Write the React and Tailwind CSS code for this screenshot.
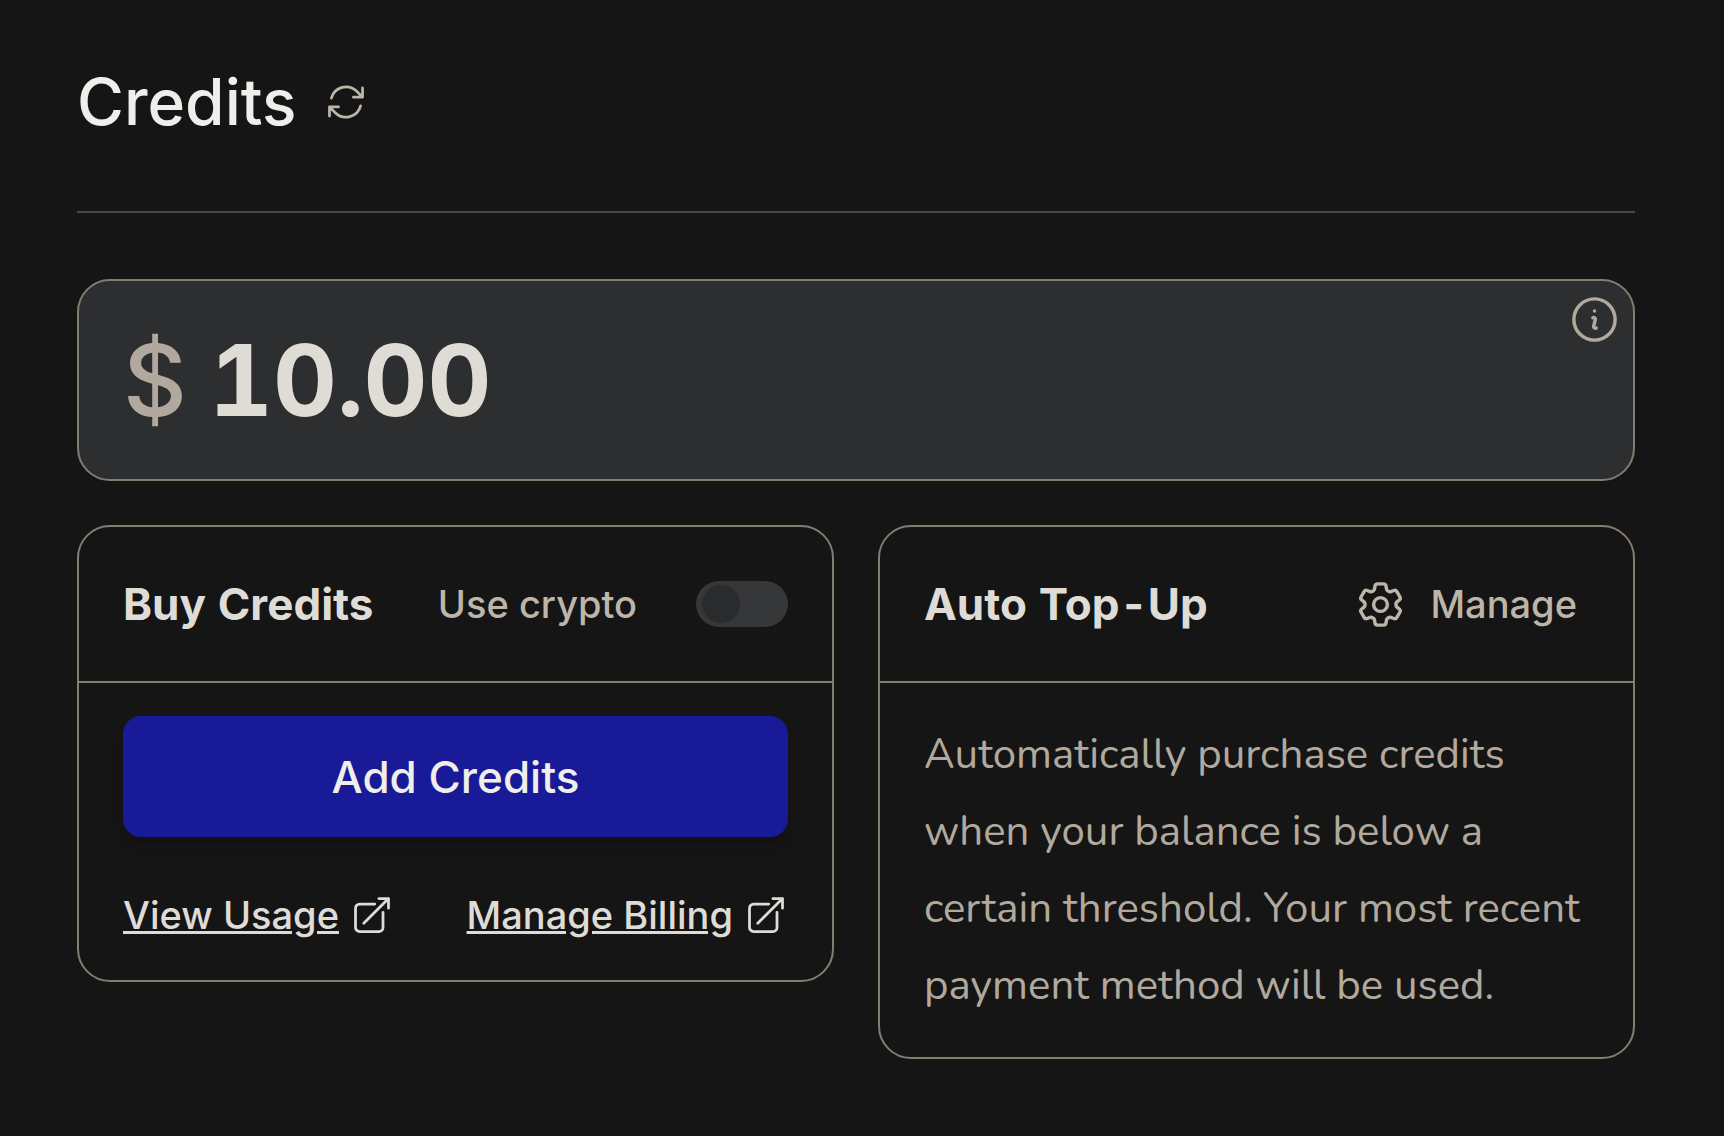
import React, { useState } from "react";

const Icon = ({ className, children }) => (
  <svg
    className={className}
    viewBox="0 0 24 24"
    fill="none"
    stroke="currentColor"
    strokeWidth="1.5"
    strokeLinecap="round"
    strokeLinejoin="round"
    aria-hidden="true"
  >
    {children}
  </svg>
);

const RefreshIcon = () => (
  <Icon className="size-11">
    <path d="M16.023 9.348h4.992v-.001M2.985 19.644v-4.992m0 0h4.992m-4.993 0 3.181 3.183a8.25 8.25 0 0 0 13.803-3.7M4.031 9.865a8.25 8.25 0 0 1 13.803-3.7l3.181 3.182m0-4.991v4.99" />
  </Icon>
);

const InfoIcon = () => (
  <Icon className="size-[55px]">
    <path d="m11.25 11.25.041-.02a.75.75 0 0 1 1.063.852l-.708 2.836a.75.75 0 0 0 1.063.853l.041-.021M21 12a9 9 0 1 1-18 0 9 9 0 0 1 18 0Zm-9-3.75h.008v.008H12V8.25Z" />
  </Icon>
);

const CogIcon = () => (
  <Icon className="size-[55px]">
    <path d="M9.594 3.94c.09-.542.56-.94 1.11-.94h2.593c.55 0 1.02.398 1.11.94l.213 1.281c.063.374.313.686.645.87.074.04.147.083.22.127.325.196.72.257 1.075.124l1.217-.456a1.125 1.125 0 0 1 1.37.49l1.296 2.247a1.125 1.125 0 0 1-.26 1.431l-1.003.827c-.293.241-.438.613-.43.992a7.723 7.723 0 0 1 0 .255c-.008.378.137.75.43.991l1.004.827c.424.35.534.955.26 1.43l-1.298 2.247a1.125 1.125 0 0 1-1.369.491l-1.217-.456c-.355-.133-.75-.072-1.076.124a6.47 6.47 0 0 1-.22.128c-.331.183-.581.495-.644.869l-.213 1.281c-.09.543-.56.94-1.11.94h-2.594c-.55 0-1.019-.398-1.11-.94l-.213-1.281c-.062-.374-.312-.686-.644-.87a6.52 6.52 0 0 1-.22-.127c-.325-.196-.72-.257-1.076-.124l-1.217.456a1.125 1.125 0 0 1-1.369-.49l-1.297-2.247a1.125 1.125 0 0 1 .26-1.431l1.004-.827c.292-.24.437-.613.43-.991a6.932 6.932 0 0 1 0-.255c.007-.38-.138-.751-.43-.992l-1.004-.827a1.125 1.125 0 0 1-.26-1.43l1.297-2.247a1.125 1.125 0 0 1 1.37-.491l1.216.456c.356.133.751.072 1.076-.124.072-.044.146-.086.22-.128.332-.183.582-.495.644-.869l.214-1.28Z" />
    <path d="M15 12a3 3 0 1 1-6 0 3 3 0 0 1 6 0Z" />
  </Icon>
);

const ExternalLink = ({ href, children }) => (
  <a href={href} className="flex items-center gap-[11px] text-[38px] font-medium leading-[60px] text-[#dfdcd7]">
    <span className="underline">{children}</span>
    <Icon className="size-11">
      <path d="M13.5 6H5.25A2.25 2.25 0 0 0 3 8.25v10.5A2.25 2.25 0 0 0 5.25 21h10.5A2.25 2.25 0 0 0 18 18.75V10.5m-10.5 6L21 3m0 0h-5.25M21 3v5.25" />
    </Icon>
  </a>
);

const Card = ({ title, action, children }) => (
  <section className="rounded-[33px] border-2 border-[#857b6e]">
    <div className="flex h-[156px] items-center justify-between border-b-2 border-[#857b6e] px-11">
      <h2 className="text-[44px] font-bold leading-[66px] text-[#dfdcd7]">{title}</h2>
      {action}
    </div>
    <div className="px-11 py-[33px]">{children}</div>
  </section>
);

const App = () => {
  const [useCrypto, setUseCrypto] = useState(false);

  return (
    <main className="min-h-screen bg-[#151515] pr-[89px] pb-[77px] pl-[77px] font-['Inter',sans-serif] tabular-nums">
      {/* Page header */}
      <header className="flex h-[213px] items-start gap-7 border-b-2 border-[#4f4840] pt-16">
        <h1 className="text-[64px] font-medium leading-[76px] text-[#f0eeea]">Credits</h1>
        <button type="button" aria-label="Refresh" className="flex h-[76px] items-center text-[#bdb5a9]">
          <RefreshIcon />
        </button>
      </header>

      {/* Balance */}
      <section className="relative mt-[66px] flex h-[202px] items-center gap-[22px] rounded-[33px] border-2 border-[#857b6e] bg-[#2d2e30] px-11">
        <span className="text-[99px] font-medium leading-[110px] text-[#b2a99e]">$</span>
        <span className="text-[99px] font-bold leading-[110px] text-[#dfdcd5]">10.00</span>
        <button type="button" aria-label="About credits" className="absolute top-[11px] right-[11px] text-[#b2a99e]">
          <InfoIcon />
        </button>
      </section>

      <div className="mt-11 grid grid-cols-2 items-start gap-11">
        <Card
          title="Buy Credits"
          action={
            <label className="flex items-center gap-[59px] text-[38px] font-medium leading-[60px] text-[#bdb5a9]">
              Use crypto
              <input
                type="checkbox"
                role="switch"
                checked={useCrypto}
                onChange={(e) => setUseCrypto(e.target.checked)}
                className="flex h-[46px] w-[92px] appearance-none items-center rounded-full bg-[#363739] px-[6px] before:size-[38px] before:rounded-full before:bg-[#2a2b2d] checked:justify-end"
              />
            </label>
          }
        >
          <button
            type="button"
            className="h-[121px] w-full rounded-[18px] bg-[#181a97] text-[44px] font-medium text-[#f0eeea] shadow-lg"
          >
            Add Credits
          </button>
          <div className="mt-12 flex items-center justify-between pb-0.5">
            <ExternalLink href="#usage">View Usage</ExternalLink>
            <ExternalLink href="#billing">Manage Billing</ExternalLink>
          </div>
        </Card>

        <Card
          title="Auto Top-Up"
          action={
            <button
              type="button"
              className="flex items-center gap-[22px] pr-3 text-[38px] font-medium leading-[60px] text-[#bdb5a9]"
            >
              <CogIcon />
              Manage
            </button>
          }
        >
          <p className="font-['Nunito','Lato',sans-serif] text-[42px] leading-[77px] text-[#b2a99e]">
            Automatically purchase credits when your balance is below a certain threshold. Your most recent payment
            method will be used.
          </p>
        </Card>
      </div>
    </main>
  );
};

export default App;
